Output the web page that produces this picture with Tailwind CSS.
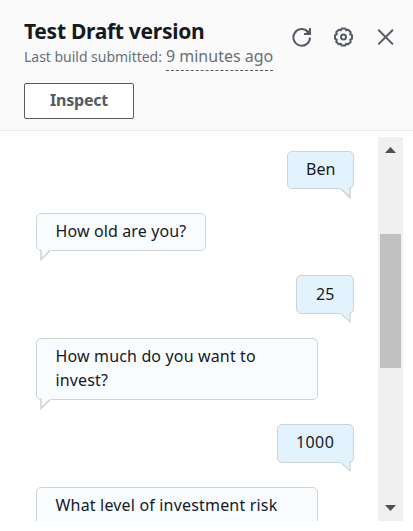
<!DOCTYPE html>
<html lang="en">
<head>
<meta charset="utf-8">
<title>Test Draft version</title>
<script src="https://cdn.jsdelivr.net/npm/@tailwindcss/browser@4"></script>
</head>
<body class="w-[413px] h-[531px] overflow-hidden bg-white font-['Noto_Sans',sans-serif] text-[#16191f]">
<header class="h-[131px] bg-[#fafafa] border-b border-[#eaeded] pl-6 pt-[18px] pr-[17px]">
  <div class="flex justify-between">
    <div class="whitespace-nowrap">
      <h1 class="text-[21px] leading-[26px] font-bold tracking-[-0.28px]">Test Draft version</h1>
      <p class="flex items-baseline h-[27px] text-[#687078]"><span class="text-sm leading-[24px] tracking-[-0.02px] mr-1">Last build submitted:</span><span class="text-base leading-[24px] h-[27px] border-b border-dashed border-[#545b64]">9 minutes ago</span></p>
    </div>
    <div class="flex gap-[22px] pt-[9px] text-[#545b64]">
      <svg class="size-5" viewBox="0 0 20 20" fill="none" stroke="currentColor" stroke-width="2"><path d="M18 10.5A8.3 8.3 0 1 1 16 5"/><path d="M18 1v6H12"/><path d="M18 2v5h-5z" fill="currentColor" stroke="none"/></svg>
      <svg class="size-5" viewBox="0 0 20 20" fill="none" stroke="currentColor" stroke-width="2" stroke-linejoin="round"><path transform="translate(9.5 10)" d="M-1.8-8.5H1.8L2.64-6.7 4.74-7.28 7.28-4.74 6.7-2.64 8.5-1.8V1.8L6.7 2.64 7.28 4.74 4.74 7.28 2.64 6.7 1.8 8.5H-1.8L-2.64 6.7-4.74 7.28-7.28 4.74-6.7 2.64-8.5 1.8V-1.8L-6.7-2.64-7.28-4.74-4.74-7.28-2.64-6.7z"/><circle cx="9.5" cy="10" r="2.5"/></svg>
      <svg class="size-5" viewBox="0 0 20 20" fill="none" stroke="currentColor" stroke-width="2"><path d="m2.3 2.8 14.6 14.6M16.9 2.8 2.3 17.4"/></svg>
    </div>
  </div>
  <button class="mt-[12px] w-[110px] h-9 border border-[#545b64] rounded-[2px] bg-white text-[#545b64] font-bold text-base leading-[32px] pb-[2px] tracking-[-0.2px]">Inspect</button>
</header>
<main class="mt-[6px] h-[384px] overflow-hidden flex">
  <section class="w-[378px] pl-9 pr-6 pt-[14px] flex flex-col gap-6 shrink-0 whitespace-nowrap text-base leading-6">
    <div class="relative self-end w-[67px] h-[38px] shrink-0 border border-[#d0d3d4] rounded-[5px] bg-[#e3f3fe] pl-[18px] pt-[5px]">Ben
      <svg class="absolute right-[2px] top-[34px] w-[11px] h-[14px]" viewBox="0 0 11 14"><path d="M0 2.5V0h10v11z" fill="#e3f3fe"/><path d="m.8 2.6 9.2 9V1.5" fill="none" stroke="#d0d3d4" stroke-width="1.5"/></svg></div>
    <div class="relative w-[170px] h-[38px] shrink-0 border border-[#d0d3d4] rounded-[5px] bg-[#f8fcff] pl-[18.5px] pt-[5px] tracking-[0.12px]"><span>How old are you?</span>
      <svg class="absolute left-[3px] top-[34px] w-[11px] h-[14px]" viewBox="0 0 11 14"><path d="M11 2.5V0H1v11z" fill="#f8fcff"/><path d="M10 2.6 1 11.5V1.5" fill="none" stroke="#d0d3d4" stroke-width="1.5"/></svg></div>
    <div class="relative self-end w-[58px] h-[39px] shrink-0 border border-[#d0d3d4] rounded-[5px] bg-[#e3f3fe] pl-[19px] pt-[6px]">25
      <svg class="absolute right-[2px] top-[35px] w-[11px] h-[14px]" viewBox="0 0 11 14"><path d="M0 2.5V0h10v11z" fill="#e3f3fe"/><path d="m.8 2.6 9.2 8V1.5" fill="none" stroke="#d0d3d4" stroke-width="1.2"/></svg></div>
    <div class="relative w-[282px] h-[62px] shrink-0 border border-[#d0d3d4] rounded-[5px] bg-[#f8fcff] pl-[18.5px] pt-[5px] tracking-[0.15px]"><span>How much do you want to<br>invest?</span>
      <svg class="absolute left-[3px] top-[58px] w-[11px] h-[14px]" viewBox="0 0 11 14"><path d="M11 2.5V0H1v11z" fill="#f8fcff"/><path d="M10 2.6 1 11.5V1.5" fill="none" stroke="#d0d3d4" stroke-width="1.5"/></svg></div>
    <div class="relative self-end w-[77px] h-[39px] shrink-0 border border-[#d0d3d4] rounded-[5px] bg-[#e3f3fe] pl-[18px] pt-[5px] tracking-[0.4px]">1000
      <svg class="absolute right-[2px] top-[35px] w-[11px] h-[14px]" viewBox="0 0 11 14"><path d="M0 2.5V0h10v11z" fill="#e3f3fe"/><path d="m.8 2.6 9.2 8V1.5" fill="none" stroke="#d0d3d4" stroke-width="1.2"/></svg></div>
    <div class="w-[282px] h-[62px] shrink-0 border border-[#d0d3d4] rounded-[5px] bg-[#f8fcff] pl-[18.5px] pt-[5px] tracking-[0.18px]">What level of investment risk</div>
  </section>
  <div class="w-[25px] bg-[#f0f0f0] flex flex-col items-center shrink-0">
    <svg class="w-[11px] h-[6px] mt-[10px]" viewBox="0 0 11 6"><path d="M0 6 5.5 0 11 6z" fill="#505050"/></svg>
    <div class="w-[21px] h-[134px] mt-[81px] bg-[#c1c1c1]"></div>
    <svg class="w-[11px] h-[6px] mt-auto mb-[10px]" viewBox="0 0 11 6"><path d="M0 0h11L5.5 6z" fill="#505050"/></svg>
  </div>
</main>
</body>
</html>
